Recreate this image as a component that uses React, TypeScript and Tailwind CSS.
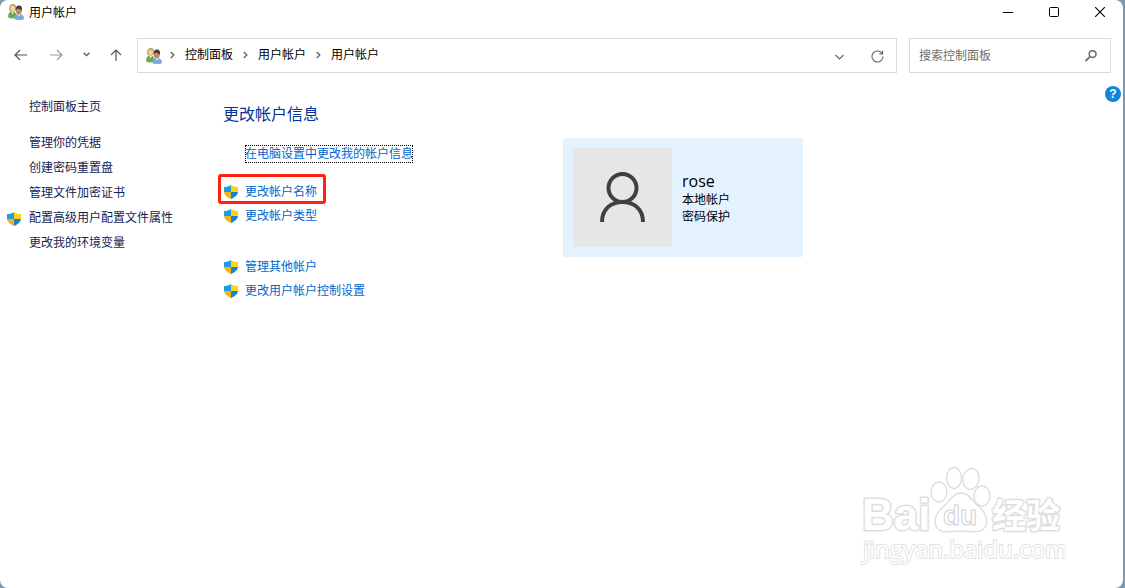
import { useState } from "react";

function UsersIcon() {
  return (
    <svg width="16" height="16" viewBox="0 0 16 16" className="shrink-0" aria-hidden="true">
      <path d="M0.2 13.6C0 9.6 1 7.6 4.4 7.4C7.4 7.4 8.6 9.2 8.4 13.4C6 14.8 2.6 14.8 0.2 13.6Z" fill="#6fa653" />
      <path d="M3.2 7.4L4.6 10.4L6.2 7.4Z" fill="#e9f2dd" />
      <path d="M1.4 6.8C0.6 2.4 2 0 4.8 0C7.8 0 8.8 2.6 7.8 6.6C6 8.2 3.2 8.2 1.4 6.8Z" fill="#b8a05a" />
      <ellipse cx="4.8" cy="4.6" rx="2.4" ry="3" fill="#f2cfa4" />
      <path d="M6.2 15C6.2 11.6 7.8 10 11 10C14.4 10 16 11.6 16 15C13.6 16.4 8.6 16.4 6.2 15Z" fill="#77a9e0" />
      <path d="M9.4 10L11 12.8L12.6 10Z" fill="#e8f1fb" />
      <ellipse cx="10.8" cy="6.8" rx="2.9" ry="3.8" fill="#c08a60" />
      <path d="M7.8 6.6C7.4 3.2 8.8 1.6 10.8 1.6C13.4 1.6 14.6 3.6 13.8 7.2C13.2 5.2 11.4 4.8 9.4 4.4C8.6 5 8.2 5.6 7.8 6.6Z" fill="#473831" />
    </svg>
  );
}

function ShieldIcon() {
  return (
    <svg width="14" height="14" viewBox="0 0 14 14" className="shrink-0" aria-hidden="true">
      <path d="M7 0C5 1.5 2.6 2 0 2V7H7Z" fill="#1e9be4" />
      <path d="M7 0C9 1.5 11.4 2 14 2V7H7Z" fill="#ffd30f" />
      <path d="M0 7C0.4 10.4 3.6 12.6 7 14V7Z" fill="#f3b514" />
      <path d="M14 7C13.6 10.4 10.4 12.6 7 14V7Z" fill="#1583cf" />
    </svg>
  );
}

function Crumb({ label }: { label: string }) {
  return (
    <li className="flex items-center">
      <svg width="5" height="8" viewBox="0 0 5 8" fill="none" stroke="#666" strokeWidth="1.4" className="mx-2.5 shrink-0" aria-hidden="true">
        <path d="M0.8 1L3.8 4L0.8 7" />
      </svg>
      <a href="#" className="whitespace-nowrap">{label}</a>
    </li>
  );
}

function ShieldLink({ label }: { label: string }) {
  return (
    <a href="#" className="flex h-6 w-fit items-center gap-[7px] whitespace-nowrap text-[#0066cc]">
      <ShieldIcon />
      {label}
    </a>
  );
}

function TitleBar() {
  return (
    <header className="flex h-6 items-center pl-2">
      <UsersIcon />
      <h1 className="ml-[5px] flex-1 pt-0.5">用户帐户</h1>
      <button type="button" aria-label="最小化" className="flex h-6 w-[46px] items-center justify-center">
        <svg width="10" height="10" viewBox="0 0 10 10" stroke="#000" aria-hidden="true">
          <path d="M0 5.5H10" />
        </svg>
      </button>
      <button type="button" aria-label="最大化" className="flex h-6 w-[46px] items-center justify-center">
        <svg width="10" height="10" viewBox="0 0 10 10" fill="none" stroke="#000" aria-hidden="true">
          <rect x="0.5" y="0.5" width="9" height="9" rx="1" />
        </svg>
      </button>
      <button type="button" aria-label="关闭" className="flex h-6 w-[46px] items-center justify-center">
        <svg width="10" height="10" viewBox="0 0 10 10" stroke="#000" strokeWidth="1.1" aria-hidden="true">
          <path d="M0 0L10 10M10 0L0 10" />
        </svg>
      </button>
    </header>
  );
}

function NavBar() {
  const [query, setQuery] = useState("");

  return (
    <nav className="mt-3.5 flex h-[35px] items-center pr-3 pl-3.5">
      <div className="flex items-center pb-0.5">
        <button type="button" aria-label="后退">
          <svg width="13" height="12" viewBox="0 0 13 12" fill="none" stroke="#555" strokeWidth="1.2" aria-hidden="true">
            <path d="M13 6H1M6 1L1 6L6 11" />
          </svg>
        </button>
        <button type="button" aria-label="前进" className="ml-[23px]">
          <svg width="13" height="12" viewBox="0 0 13 12" fill="none" stroke="#999" strokeWidth="1.2" aria-hidden="true">
            <path d="M0 6H12M7 1L12 6L7 11" />
          </svg>
        </button>
        <button type="button" aria-label="最近浏览的位置" className="ml-5">
          <svg width="7" height="5" viewBox="0 0 7 5" fill="none" stroke="#555" strokeWidth="1.3" aria-hidden="true">
            <path d="M0.6 0.8L3.5 3.6L6.4 0.8" />
          </svg>
        </button>
        <button type="button" aria-label="向上" className="ml-5">
          <svg width="12" height="12" viewBox="0 0 12 12" fill="none" stroke="#555" strokeWidth="1.2" aria-hidden="true">
            <path d="M6 12V1M1 6L6 1L11 6" />
          </svg>
        </button>
      </div>

      <div className="ml-[15px] flex h-full flex-1 items-center border border-[#d9d9d9] pr-3 pl-2">
        <UsersIcon />
        <ol className="-ml-0.5 flex items-center pb-0.5">
          <Crumb label="控制面板" />
          <Crumb label="用户帐户" />
          <Crumb label="用户帐户" />
        </ol>
        <div className="ml-auto flex items-center pt-0.5">
          <button type="button" aria-label="展开地址">
            <svg width="9" height="6" viewBox="0 0 9 6" fill="none" stroke="#666" strokeWidth="1.1" aria-hidden="true">
              <path d="M0.5 1L4.5 5L8.5 1" />
            </svg>
          </button>
          <button type="button" aria-label="刷新" className="ml-[27px]">
            <svg width="13" height="13" viewBox="0 0 13 13" fill="none" stroke="#666" strokeWidth="1.1" aria-hidden="true">
              <path d="M11.2 3.6A5.5 5.5 0 1 0 12 6.6M11.6 0.6V4H8.2" />
            </svg>
          </button>
        </div>
      </div>

      <label className="ml-3 flex h-full w-[202px] items-center border border-[#d9d9d9] px-[9px]">
        <input
          type="text"
          value={query}
          onChange={(e) => setQuery(e.target.value)}
          placeholder="搜索控制面板"
          aria-label="搜索控制面板"
          className="min-w-0 flex-1 outline-none placeholder:text-[#6d6d6d]"
        />
        <svg width="12" height="12" viewBox="0 0 12 12" fill="none" stroke="#707070" className="mr-1 shrink-0" aria-hidden="true">
          <circle cx="7.6" cy="4" r="3.4" strokeWidth="1.6" />
          <path d="M5.2 6.4L0.6 11" strokeWidth="1.8" />
        </svg>
      </label>
    </nav>
  );
}

function Sidebar() {
  return (
    <aside className="w-[223px] shrink-0 pt-[22px] leading-[25px] whitespace-nowrap text-[#151c55]">
      <a href="#" className="ml-[29px] block">控制面板主页</a>
      <ul className="mt-[11px]">
        <li className="pl-[29px]"><a href="#">管理你的凭据</a></li>
        <li className="pl-[29px]"><a href="#">创建密码重置盘</a></li>
        <li className="pl-[29px]"><a href="#">管理文件加密证书</a></li>
        <li className="pl-[7px]">
          <a href="#" className="flex items-center gap-2">
            <ShieldIcon />
            配置高级用户配置文件属性
          </a>
        </li>
        <li className="pl-[29px]"><a href="#">更改我的环境变量</a></li>
      </ul>
    </aside>
  );
}

function AccountCard() {
  return (
    <section className="flex h-[119px] w-60 shrink-0 items-center gap-2.5 rounded-xs bg-[#e3f2fe] p-2.5">
      <div className="flex size-[99px] shrink-0 items-center justify-center bg-[#e6e6e6]">
        <svg width="45" height="51" viewBox="0 0 45 51" fill="none" stroke="#404040" strokeWidth="4" aria-hidden="true">
          <circle cx="22.5" cy="16" r="14" />
          <path d="M2 50C2 37 11 30 22.5 30C34 30 43 37 43 50" />
        </svg>
      </div>
      <div className="leading-[17px] text-black">
        <p className="font-['Open_Sans',sans-serif] text-base leading-[22px]">rose</p>
        <p>本地帐户</p>
        <p>密码保护</p>
      </div>
    </section>
  );
}

function Watermark() {
  return (
    <svg
      width="210"
      height="105"
      viewBox="0 0 210 105"
      className="absolute right-[57px] bottom-[20px]"
      fill="#fff"
      stroke="#dedede"
      strokeWidth="1.4"
      strokeLinejoin="round"
      aria-hidden="true"
    >
      <g fontWeight="700" paintOrder="stroke" strokeWidth="3">
        <text x="6" y="67" fontSize="44" fontFamily="'Liberation Sans', sans-serif">Bai</text>
        <text x="136" y="65" fontSize="34" fontFamily="'Noto Sans CJK SC', sans-serif">经验</text>
      </g>
      <ellipse cx="83" cy="29" rx="8" ry="10" />
      <ellipse cx="98" cy="15" rx="7.5" ry="10.5" />
      <ellipse cx="115" cy="16" rx="8" ry="10.5" transform="rotate(10 115 16)" />
      <ellipse cx="126" cy="33" rx="8" ry="10" />
      <path d="M105 30C113 30 116 38 122 43C128 48 133 54 130 62C126 72 115 68 105 68C95 68 84 72 80 63C77 55 82 48 88 43C94 38 97 30 105 30Z" />
      <text x="87" y="62" fontSize="28" fontWeight="700" strokeWidth="1" stroke="#d0d0d0" fontFamily="'Liberation Sans', sans-serif">du</text>
      <text x="7" y="95" fontSize="24" fontFamily="'Open Sans', sans-serif" paintOrder="stroke" stroke="#e2e2e2" strokeWidth="2">jingyan.baidu.com</text>
    </svg>
  );
}

export default function App() {
  return (
    <div className="flex min-h-screen bg-[#7c98ae] pr-0.5 font-['Liberation_Sans','Noto_Sans_CJK_SC',sans-serif] text-xs text-black">
      <div className="relative flex flex-1 flex-col rounded-lg bg-white">
        <TitleBar />
        <NavBar />
        <div className="flex flex-1">
          <Sidebar />
          <main className="flex flex-1 items-start">
            <div className="w-[340px] shrink-0 pt-[29px]">
              <h2 className="text-base leading-[26px] text-[#003399]">更改帐户信息</h2>
              <a href="#" className="mt-[17px] ml-[22px] block w-fit leading-[18px] whitespace-nowrap text-[#0066cc] outline-1 -outline-offset-1 outline-black outline-dotted">
                在电脑设置中更改我的帐户信息
              </a>
              <div className="relative mt-[17px] pl-px">
                <ShieldLink label="更改帐户名称" />
                <ShieldLink label="更改帐户类型" />
                {/* highlight drawn over the first link */}
                <span className="pointer-events-none absolute -top-1.5 -left-[5px] h-[30px] w-[108px] rounded-[3px] border-3 border-[#ff2010]" />
              </div>
              <div className="mt-[27px] pl-px">
                <ShieldLink label="管理其他帐户" />
                <ShieldLink label="更改用户帐户控制设置" />
              </div>
            </div>
            <div className="pt-[65px]">
              <AccountCard />
            </div>
            <button
              type="button"
              aria-label="帮助"
              className="mt-[13px] mr-0.5 ml-auto flex size-4 items-center justify-center rounded-full bg-[#0f86d8] text-xs font-bold text-white"
            >
              ?
            </button>
          </main>
        </div>
        <Watermark />
      </div>
    </div>
  );
}
